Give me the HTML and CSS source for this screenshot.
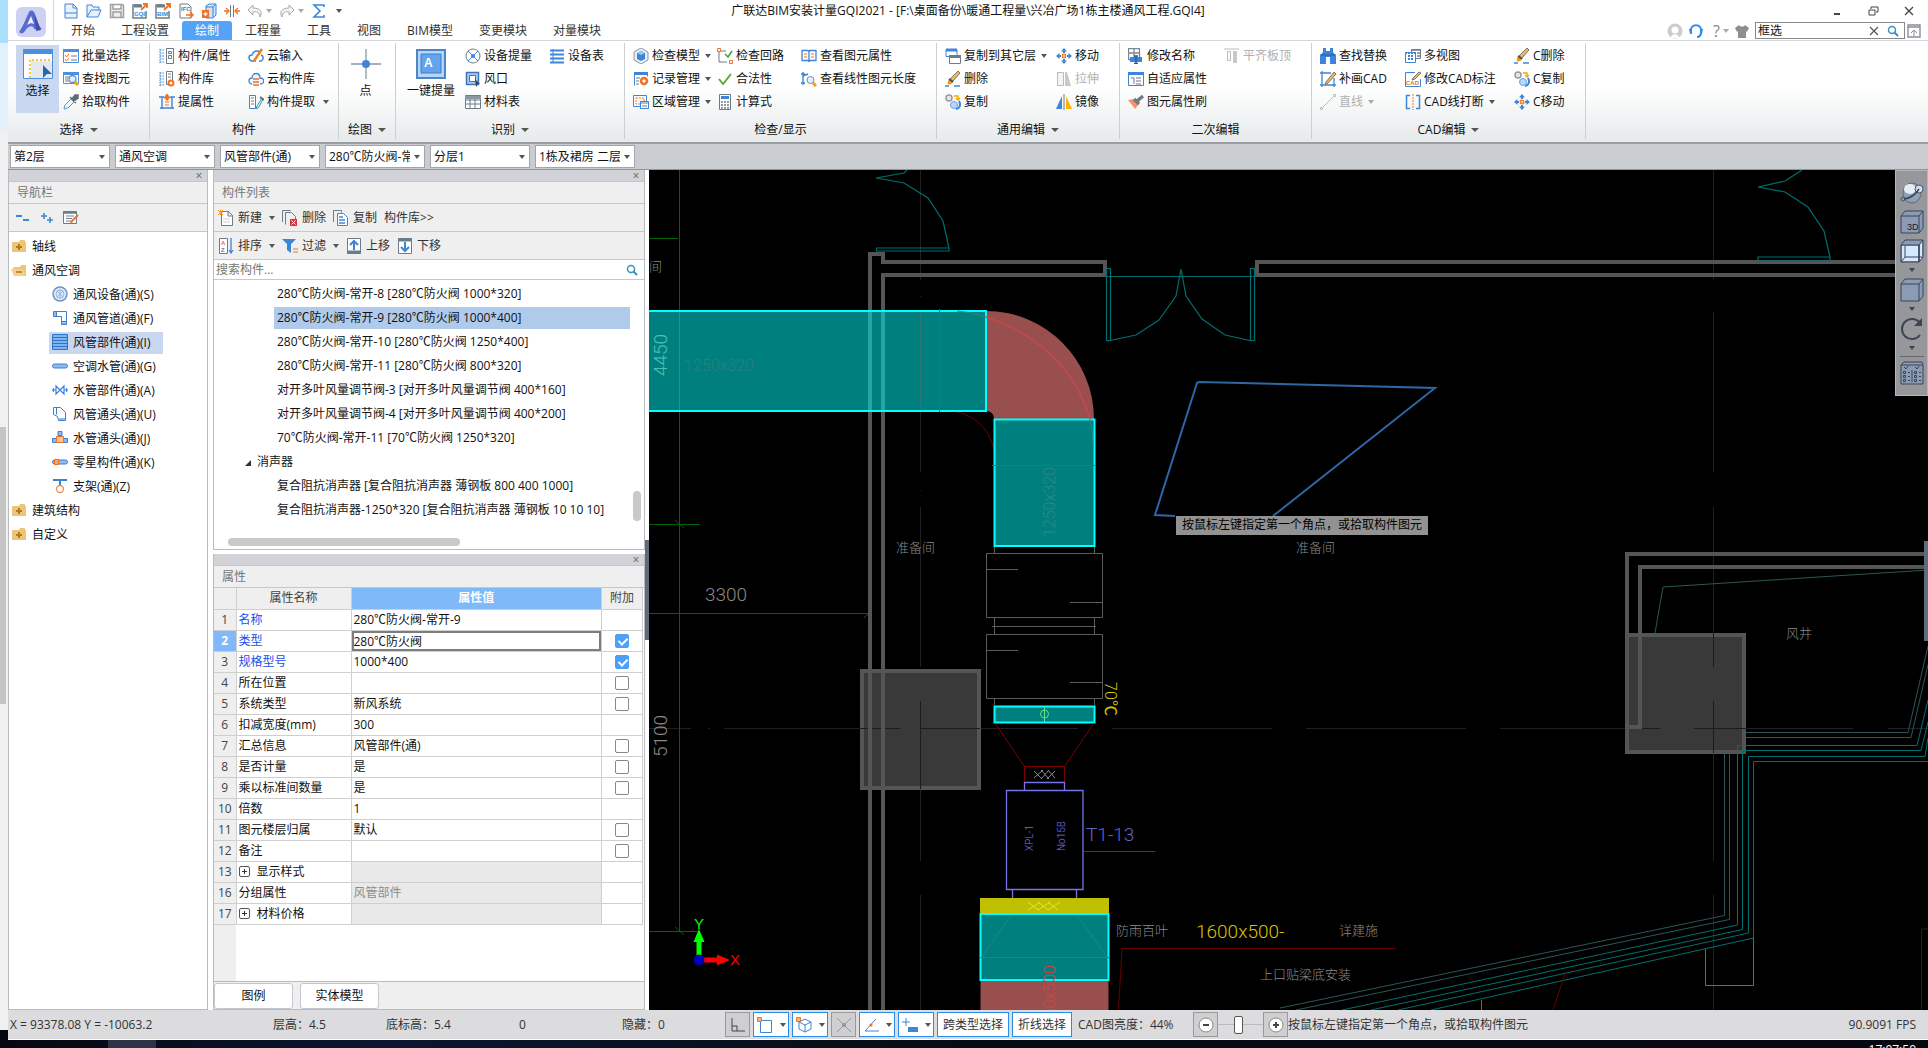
FILE: index.html
```html
<!DOCTYPE html>
<html lang="zh-CN">
<head>
    <meta charset="UTF-8">
    <meta name="viewport" content="width=device-width, initial-scale=1.0">
    <title>广联达BIM安装计量GQI2021</title>
    <link rel="stylesheet" href="styles.css">
</head>
<body>
    <!-- shared icons -->
    <svg class="sprite" width="0" height="0" aria-hidden="true">
        <symbol id="i-eraser" viewBox="0 0 16 16"><path d="M0 15h4M9 15h6" stroke="#3d85d8" stroke-width="1.5"/><path d="M13 0l2 2-7 8-3-2z" fill="#f8b64c" stroke="#777"/><path d="M5 8l3 2c-1 4-4 4-5 3s0-4 2-5z" fill="#ff9800"/><path d="M4 8l4 3" stroke="#456" stroke-width="2"/></symbol>
        <symbol id="i-copies" viewBox="0 0 16 16"><circle cx="4" cy="4" r="3" fill="#e8e8e8" stroke="#999" stroke-width="1.5"/><path d="M9 2h4v3M11 4l2 2 2-2" fill="none" stroke="#f5a800" stroke-width="1.3"/><path d="M14 7c2 4 1 7-3 8" fill="none" stroke="#3d85d8" stroke-width="2"/><circle cx="9" cy="11" r="3.500" fill="#b9d8fb" stroke="#6aa5e6"/></symbol>
        <symbol id="i-move" viewBox="0 0 16 16"><path d="M8 0l3 3.500H5zM8 16l3-3.500H5zM0 8l3.500-3v6zM16 8l-3.500-3v6z" fill="#3d85d8"/><path d="M8 3v2M8 11v2M3 8h2M11 8h2" stroke="#3d85d8" stroke-width="2"/><path d="M6.500 6.500h3v3h-3z" fill="#fff" stroke="#f58220" stroke-width="1.5"/></symbol>
        <symbol id="i-folder" viewBox="0 0 16 16"><path d="M1 4h7l1-2h5v2h1v10H1z" fill="#ecc578"/><path d="M8 6v6M5 9h6" stroke="#b77a16" stroke-width="2"/></symbol>
        <symbol id="i-mag" viewBox="0 0 12 12"><circle cx="5" cy="5" r="3.500" fill="none" stroke="#3b8fbf" stroke-width="1.5"/><path d="M7.500 7.500l3.500 3.500" stroke="#3b8fbf" stroke-width="2"/></symbol>
        <symbol id="i-cube" viewBox="0 0 24 24"><path d="M1 6l4-5h18v17l-4 5H1z" fill="#8b9bb3"/><path d="M1 6l4-5h18v17l-4 5H1zM1 6h18v17M19 6l4-5" fill="none" stroke="#3b4556"/></symbol>
    </svg>

    <div class="screen">
        <div class="behind"><i></i></div>
        <div class="app">
            <header class="header">
                <button class="logo" aria-label="菜单">
                    <svg width="30" height="30" viewBox="0 0 30 30"><rect width="30" height="30" rx="6" fill="#cdd2f2"/><path d="M3 25C7 20 10 11 13 5c1-2 4-2 5 0l3 12 5 5-8 0c0-4-6-4-9 2-2 3-4 3-6 1z" fill="#5a6bd0"/><path d="M15 9l-4 9c3-2 5-2 7-1z" fill="#eef0fc"/><path d="M18 5l7 18-5 1z" fill="#3f4fae"/></svg>
                </button>
                <div class="quick">
                    <button aria-label="新建"><svg class="ic" viewBox="0 0 16 16"><path d="M2 1h8l4 4v10H2zM10 1v4h4M2 10h12" fill="#e8f2fd" stroke="#3d85d8"/></svg></button>
                    <button aria-label="打开"><svg class="ic" viewBox="0 0 16 16"><path d="M1 14V2h5l1 2h6v3M1 14l4-7h10l-3 7z" fill="#e8f2fd" stroke="#3d85d8"/></svg></button>
                    <button aria-label="保存"><svg class="ic" viewBox="0 0 16 16"><path d="M1.500 1.500h12l1 1v12h-13zM4 2v4h8V2M4 14v-5h8v5" fill="#eee" stroke="#a0a0a0" stroke-width="1.5"/></svg></button>
                    <button aria-label="导出GQI"><svg class="ic" viewBox="0 0 16 16"><path d="M9 2H1v13h13V8" fill="none" stroke="#6d7d88" stroke-width="1.5"/><path d="M2 3h8" stroke="#6d7d88" stroke-width="3"/><path d="M9 7l6-6M11 1h4v4" fill="none" stroke="#f37021" stroke-width="1.8"/><text x="2" y="13" class="tiny blue">GQI</text></svg></button>
                    <button aria-label="导出BIM"><svg class="ic" viewBox="0 0 16 16"><path d="M9 2H1v13h13V8" fill="none" stroke="#6d7d88" stroke-width="1.5"/><path d="M2 3h8" stroke="#6d7d88" stroke-width="3"/><path d="M9 7l6-6M11 1h4v4" fill="none" stroke="#f37021" stroke-width="1.8"/><text x="2" y="13" class="tiny blue">BIM</text></svg></button>
                    <button aria-label="导出IFC"><svg class="ic" viewBox="0 0 16 16"><path d="M2 1h8l3 3v11H2z" fill="#fff" stroke="#6d7d88"/><text x="3" y="8" class="tiny">IFC</text><path d="M8 12h7M12 9l3 3-3 3" fill="none" stroke="#f37021" stroke-width="1.5"/></svg></button>
                    <button aria-label="添加"><svg class="ic" viewBox="0 0 16 16"><path d="M5 3l3-2h7v11l-3 3H5z" fill="#cfe3fa" stroke="#3d85d8"/><path d="M12 4v10M5 4h7l3-3" fill="none" stroke="#3d85d8"/><path d="M1 7h7v8H1z" fill="#f37021"/><path d="M4.500 9v4M2.500 11h4" stroke="#fff" stroke-width="1.3"/></svg></button>
                    <button aria-label="对齐"><svg class="ic" viewBox="0 0 16 16"><path d="M6.500 2v12M9.500 2v12" stroke="#6d7d88"/><path d="M0 8h4M2 5l3 3-3 3M16 8h-4M14 5l-3 3 3 3" fill="none" stroke="#f37021" stroke-width="1.3"/></svg></button>
                    <button aria-label="撤销"><svg class="ic" viewBox="0 0 16 16"><path d="M6 2L1 7l5 5V9c4-1 6 0 7 5 3-5 0-9-7-9z" fill="#f4f4f4" stroke="#a8a8a8"/></svg></button>
                    <button class="dd" aria-label="撤销列表"><i class="caret faint"></i></button>
                    <button aria-label="重做"><svg class="ic" viewBox="0 0 16 16"><path d="M10 2l5 5-5 5V9c-4-1-6 0-7 5-3-5 0-9 7-9z" fill="#f4f4f4" stroke="#a8a8a8"/></svg></button>
                    <button class="dd" aria-label="重做列表"><i class="caret faint"></i></button>
                    <button aria-label="汇总"><svg class="ic" viewBox="0 0 16 16"><path d="M13 4V2H3l6 6-6 6h10v-2" fill="none" stroke="#3d85d8" stroke-width="1.6"/></svg></button>
                    <button class="dd over" aria-label="更多"><i class="caret"></i></button>
                </div>
                <h1 class="title">广联达BIM安装计量GQI2021 - [F:\桌面备份\暖通工程量\兴冶广场1栋主楼通风工程.GQI4]</h1>
                <div class="window-buttons">
                    <button aria-label="最小化"><svg class="ic" viewBox="0 0 16 16"><path d="M5 11h6" stroke="#444" stroke-width="2"/></svg></button>
                    <button aria-label="还原"><svg class="ic" viewBox="0 0 16 16"><path d="M6 6V4h7v5h-2M4 7h6v5H4z" fill="none" stroke="#444"/></svg></button>
                    <button aria-label="关闭"><svg class="ic" viewBox="0 0 16 16"><path d="M4 4l8 8M12 4l-8 8" stroke="#444" stroke-width="1.3"/></svg></button>
                </div>
                <nav class="tabs">
                    <button>开始</button><button>工程设置</button><button class="active">绘制</button><button>工程量</button><button>工具</button><button>视图</button><button>BIM模型</button><button>变更模块</button><button>对量模块</button>
                </nav>
                <div class="tools">
                    <svg class="ic" viewBox="0 0 16 16"><circle cx="8" cy="8" r="7.500" fill="#ccc"/><circle cx="8" cy="7" r="3.500" fill="#fff"/><path d="M4 15c0-5 8-5 8 0z" fill="#fff"/></svg>
                    <svg class="ic" viewBox="0 0 16 16"><path d="M3 9C1 0 15 0 13 9M9 14c3 0 4-2 4-5" fill="none" stroke="#2f8cf0" stroke-width="2"/><path d="M1 6h3v5H2zM15 6h-3v5h2z" fill="#2f8cf0"/></svg>
                    <button class="help">?<i class="caret faint"></i></button>
                    <svg class="ic" viewBox="0 0 16 16"><path d="M5 2c1 2 5 2 6 0l4 3-2 4-1-1v7H4V8L3 9 1 5z" fill="#8e8e8e"/></svg>
                    <label class="top-search"><input type="text" value="框选" aria-label="搜索命令"><svg width="12" height="12" viewBox="0 0 12 12"><path d="M2 2l8 8M10 2l-8 8" stroke="#555" stroke-width="1.2"/></svg><svg width="12" height="12"><use href="#i-mag"/></svg></label>
                    <svg class="ic" viewBox="0 0 16 16"><path d="M2 2h12v12H2zM2 4h12" fill="none" stroke="#8a8f96" stroke-width="1.4"/><path d="M8 13V7M5 10l3-3 3 3" fill="none" stroke="#8a8f96"/></svg>
                </div>
            </header>

            <section class="ribbon">
                <div class="group g-select">
                    <div class="cols">
                        <button class="big on"><svg width="30" height="30" viewBox="0 0 30 30"><path d="M.5.5h29v29H.5z" fill="#fff" stroke="#4a90dd"/><path d="M0 0h30v5H0z" fill="#4a90dd"/><path d="M7 29V11h20" fill="none" stroke="#f0b400" stroke-width="1.5" stroke-dasharray="2 2"/><path d="M8 12h21v17H8z" fill="#e4e8ee"/><path d="M20 16l9 9h-5l-4 4z" fill="#2767b0"/></svg>选择</button>
                        <div class="col">
                            <button><svg class="ic" viewBox="0 0 16 16"><path d="M.5 1.500h15v13H.5z" fill="#fff" stroke="#4a90dd"/><path d="M0 1h16v3H0z" fill="#4a90dd"/><path d="M2 7l1.500 2L6 6M2 11l1.500 2L6 10" fill="none" stroke="#f37021"/><path d="M8 8h6M8 12h6" stroke="#6d7d88"/></svg>批量选择</button>
                            <button><svg class="ic" viewBox="0 0 16 16"><path d="M.5 1.500h15v11H.5z" fill="#fff" stroke="#4a90dd"/><path d="M0 1h16v3H0z" fill="#4a90dd"/><path d="M2 6h4M2 8h3M2 10h4" stroke="#6d7d88"/><circle cx="9.500" cy="8" r="3.500" fill="#e6eefb" stroke="#6688cc" stroke-width="1.3"/><path d="M12 11l3 3" stroke="#f5a100" stroke-width="3"/></svg>查找图元</button>
                            <button><svg class="ic" viewBox="0 0 16 16"><path d="M1 15l1-4 6-6 3 3-6 6z" fill="#eef6fb" stroke="#5a9bc8"/><path d="M7 3l6 6M9 5l3-4 3 0v3l-4 3z" fill="#5f6c78" stroke="#5f6c78" stroke-width="1.5"/></svg>拾取构件</button>
                        </div>
                    </div>
                    <div class="caption">选择<i class="caret lg"></i></div>
                </div>
                <div class="group g-comp">
                    <div class="cols">
                        <div class="col">
                            <button><svg class="ic" viewBox="0 0 16 16"><path d="M1 1v14M1 2h4M1 5h4M1 8h4M1 11h4M1 14h4" fill="none" stroke="#3d85d8" stroke-dasharray="1.500 1"/><path d="M7.500.5h7v15h-7z" fill="#fff" stroke="#6d7d88"/><path d="M9.500 3.500h3v2h-3zM9.500 7.500h3v3h-3z" fill="none" stroke="#6d7d88"/></svg>构件/属性</button>
                            <button><svg class="ic" viewBox="0 0 16 16"><path d="M1 1v14M1 2h4M1 5h4M1 8h4M1 11h4M1 14h4" fill="none" stroke="#3d85d8" stroke-dasharray="1.500 1"/><path d="M7.500.5h6v13h-6z" fill="#fff" stroke="#6d7d88"/><path d="M9 3h3M9 6h3" stroke="#6d7d88"/><circle cx="12" cy="12" r="2.500" fill="#fff" stroke="#f37021" stroke-width="2"/></svg>构件库</button>
                            <button><svg class="ic" viewBox="0 0 16 16"><path d="M0 3h5M11 3h5M3 3v12M13 3v12M1 14h14" fill="none" stroke="#3d85d8" stroke-width="1.4"/><path d="M8 0l3 4H9v2H7V4H5zM6 8h4M6 11h4" fill="#f37021" stroke="#f37021"/></svg>提属性</button>
                        </div>
                        <div class="col">
                            <button><svg class="ic" viewBox="0 0 16 16"><path d="M8 13H4C0 12 0 7 4 7c1-4 5-5 8-3" fill="none" stroke="#3d85d8" stroke-width="1.4"/><path d="M13 7c3 1 3 5 0 6h-2" fill="none" stroke="#3d85d8" stroke-width="1.4"/><path d="M14 1l-8 12" stroke="#f08020" stroke-width="2.500"/></svg>云输入</button>
                            <button><svg class="ic" viewBox="0 0 16 16"><path d="M4 13C0 13 0 7 4 7c0-6 8-6 8 0 5 0 5 6 0 6" fill="#eef6ff" stroke="#3d85d8" stroke-width="1.3"/><path d="M5 8h6M5 11h6M5 14h6" stroke="#f37021" stroke-width="1.6"/></svg>云构件库</button>
                            <button><svg class="ic" viewBox="0 0 16 16"><path d="M1.500 1.500h6v13h-6z" fill="#fff" stroke="#3d85d8"/><path d="M3 4h3M3 7h3M3 10h3" stroke="#6d7d88"/><path d="M14 4l-5 8-1 3 3-2 4-8" fill="#dff3f8" stroke="#3a9ab0"/><path d="M12 3l4 3" stroke="#5f6c78" stroke-width="2"/></svg>构件提取<i class="caret far"></i></button>
                        </div>
                    </div>
                    <div class="caption">构件</div>
                </div>
                <div class="group g-draw">
                    <div class="cols">
                        <button class="big"><svg width="30" height="30" viewBox="0 0 30 30"><path d="M15 0v30M0 15h30" stroke="#8b97a3" stroke-width="1.3"/><circle cx="15" cy="15" r="4" fill="#3d85d8"/></svg>点</button>
                    </div>
                    <div class="caption">绘图<i class="caret lg"></i></div>
                </div>
                <div class="group g-detect">
                    <div class="cols">
                        <button class="big wide"><svg width="30" height="30" viewBox="0 0 30 30"><path d="M1 1h28v28H1z" fill="#b8d5f7" stroke="#4a87c8" stroke-width="2"/><path d="M5 5h20v19H5z" fill="#62a4ee" stroke="#3f7ec4"/><text x="8" y="18" class="glyph">A</text></svg>一键提量</button>
                        <div class="col">
                            <button><svg class="ic" viewBox="0 0 16 16"><circle cx="8" cy="8" r="7" fill="#fff" stroke="#6d7d88"/><path d="M3 3l10 10M13 3L3 13" stroke="#3d85d8"/><circle cx="8" cy="8" r="2" fill="#3d85d8"/></svg>设备提量</button>
                            <button><svg class="ic" viewBox="0 0 16 16"><path d="M1.500 1.500h12v12h-12z" fill="#a9ccf5" stroke="#3d74b8" stroke-width="1.5"/><path d="M4.500 4.500h6v6h-6z" fill="#fff" stroke="#3d74b8"/><path d="M10 8l5 5-2 0-2 3z" fill="#444"/></svg>风口</button>
                            <button><svg class="ic" viewBox="0 0 16 16"><path d="M.5 1.500h15v13H.5zM0 6h16M0 10h16M5 1v14M10 1v14" fill="#fff" stroke="#6d7d88"/><path d="M0 2h16v3H0z" fill="#8b97a3"/></svg>材料表</button>
                        </div>
                        <div class="col">
                            <button><svg class="ic" viewBox="0 0 16 16"><path d="M1 2.500h14M1 6.500h14M1 10.500h14M1 14.500h14" stroke="#3d85d8" stroke-width="2"/><path d="M4 1v14" stroke="#3d85d8"/></svg>设备表</button>
                        </div>
                    </div>
                    <div class="caption">识别<i class="caret lg"></i></div>
                </div>
                <div class="group g-check">
                    <div class="cols">
                        <div class="col">
                            <button><svg class="ic" viewBox="0 0 16 16"><path d="M8 0l7 4v8l-7 4-7-4V4z" fill="#e8eef4" stroke="#8b97a3"/><path d="M8 3l4 2v6l-4 2-4-2V5z" fill="#3d85d8"/><path d="M8 7l4-2-4-2-4 2z" fill="#9cc8f8"/></svg>检查模型<i class="caret near"></i></button>
                            <button><svg class="ic" viewBox="0 0 16 16"><path d="M1.500 14.500V1.500h13v4" fill="#fff" stroke="#3d85d8"/><path d="M1 2.500h14" stroke="#3d85d8" stroke-width="3"/><path d="M3 7h4M3 10h3M3 13h3" stroke="#6d7d88"/><circle cx="11" cy="10" r="3" fill="#fff" stroke="#f37021" stroke-width="2.500"/></svg>记录管理<i class="caret near"></i></button>
                            <button><svg class="ic" viewBox="0 0 16 16"><path d="M.5 1.500h13v11H.5z" fill="#fff" stroke="#3d85d8"/><path d="M3 4h8v6H3z" fill="none" stroke="#f37021" stroke-dasharray="2 1"/><path d="M7.500 7.500h8v7h-8z" fill="#fff" stroke="#3d85d8"/><path d="M8 9h7M9 12h5" stroke="#6d7d88"/></svg>区域管理<i class="caret near"></i></button>
                        </div>
                        <div class="col">
                            <button><svg class="ic" viewBox="0 0 16 16"><path d="M4 3h5M2 4v10h8" fill="none" stroke="#6d7d88"/><path d="M.5.5h3v3h-3zM12.500 12.500h3v3h-3z" fill="#fff" stroke="#f37021"/><path d="M8 6l3 3 4-6" fill="none" stroke="#4aa04a" stroke-width="1.6"/></svg>检查回路</button>
                            <button><svg class="ic" viewBox="0 0 16 16"><path d="M2 8l4 5 8-10" fill="none" stroke="#5aa83c" stroke-width="2"/></svg>合法性</button>
                            <button><svg class="ic" viewBox="0 0 16 16"><path d="M2.500.5h11v15h-11z" fill="#fff" stroke="#6d7d88"/><path d="M4 2h8v3H4z" fill="#3d85d8"/><path d="M4 8h8M4 11h8M4 14h8" stroke="#6d7d88" stroke-width="1.5" stroke-dasharray="2 1"/></svg>计算式</button>
                        </div>
                        <div class="col">
                            <button><svg class="ic" viewBox="0 0 16 16"><path d="M1 2.500h6l1 1 1-1h6v10H9l-1 1-1-1H1zM8 3v10" fill="#fff" stroke="#3d85d8" stroke-width="1.3"/><path d="M3 6h3M3 9h3M10 6h3M10 9h3" stroke="#f37021"/></svg>查看图元属性</button>
                            <button><svg class="ic" viewBox="0 0 16 16"><path d="M2 1v13M0 3h4M0 12h4M2 5l5-2" stroke="#3d85d8" stroke-width="1.4"/><circle cx="9.500" cy="9" r="3.500" fill="#e6eefb" stroke="#6688cc"/><path d="M12 12l3 3" stroke="#f5a100" stroke-width="3"/></svg>查看线性图元长度</button>
                        </div>
                    </div>
                    <div class="caption">检查/显示</div>
                </div>
                <div class="group g-edit">
                    <div class="cols">
                        <div class="col">
                            <button><svg class="ic" viewBox="0 0 16 16"><path d="M1 1.500h11v7H1z" fill="#fff" stroke="#3d85d8"/><path d="M1 2h11" stroke="#3d85d8" stroke-width="3"/><path d="M4.500 7.500h11v8h-11z" fill="#fff" stroke="#6d7d88"/><path d="M4 8.500h12" stroke="#6d7d88" stroke-width="3"/></svg>复制到其它层<i class="caret near"></i></button>
                            <button><svg class="ic"><use href="#i-eraser"/></svg>删除</button>
                            <button><svg class="ic"><use href="#i-copies"/></svg>复制</button>
                        </div>
                        <div class="col">
                            <button><svg class="ic"><use href="#i-move"/></svg>移动</button>
                            <button disabled><svg class="ic" viewBox="0 0 16 16"><path d="M1.500 1.500h6v13h-6z" fill="#f4f4f4" stroke="#bbb"/><path d="M9 1h2l4 14H9z" fill="#c8c8c8"/></svg>拉伸</button>
                            <button><svg class="ic" viewBox="0 0 16 16"><path d="M6 2v13H0z" fill="#3d85d8"/><path d="M10 2v13h6z" fill="#fbb400"/><path d="M8 0v16" stroke="#6d7d88"/></svg>镜像</button>
                        </div>
                    </div>
                    <div class="caption">通用编辑<i class="caret lg"></i></div>
                </div>
                <div class="group g-second">
                    <div class="cols">
                        <div class="col">
                            <button><svg class="ic" viewBox="0 0 16 16"><path d="M.5.5h11v11H.5zM0 5h11M6 0v12" fill="none" stroke="#7b8893" stroke-width="1.3"/><path d="M2 9h12v5H2z" fill="#3d85d8"/><path d="M8 8v8M6 8h4M6 15.500h4" stroke="#1f5ca8" stroke-width="1.3"/></svg>修改名称</button>
                            <button><svg class="ic" viewBox="0 0 16 16"><path d="M.5 1.500h15v13H.5z" fill="#fff" stroke="#3d85d8"/><path d="M0 2.500h16" stroke="#3d85d8" stroke-width="3"/><path d="M3 7h3v6M8 7h5M8 10h5M8 13h5" fill="none" stroke="#6d7d88"/></svg>自适应属性</button>
                            <button><svg class="ic" viewBox="0 0 16 16"><path d="M0 6l6-1 5 5-4 5z" fill="#f5946c"/><path d="M6 5l5 5M9 7l6-5" stroke="#6d7d88" stroke-width="3.500"/></svg>图元属性刷</button>
                        </div>
                        <div class="col">
                            <button disabled><svg class="ic" viewBox="0 0 16 16"><path d="M0 1h15" stroke="#bbb"/><path d="M3.500 3.500h3v9h-3z" fill="#fff" stroke="#bbb"/><path d="M9 3h4v12H9z" fill="#c8c8c8"/></svg>平齐板顶</button>
                        </div>
                    </div>
                    <div class="caption">二次编辑</div>
                </div>
                <div class="group g-cad">
                    <div class="cols">
                        <div class="col">
                            <button><svg class="ic" viewBox="0 0 16 16"><path d="M3 0h3v3h4V0h3v4l3 4v8h-6V9H6v7H0V8l3-4z" fill="#3d85d8"/><path d="M0 7h16" stroke="#1f5ca8"/></svg>查找替换</button>
                            <button><svg class="ic" viewBox="0 0 16 16"><path d="M2 0v16M0 2h11M0 14h16M14 7v9" stroke="#3d85d8" stroke-width="1.300"/><path d="M14 1l-8 10-1 3 3-2 8-9z" fill="#f8b64c" stroke="#777"/></svg>补画CAD</button>
                            <button disabled><svg class="ic" viewBox="0 0 16 16"><path d="M3 13L13 3M.5 13.500h2v2h-2zM13.500.5h2v2h-2z" fill="none" stroke="#bbb"/></svg>直线<i class="caret near faint"></i></button>
                        </div>
                        <div class="col">
                            <button><svg class="ic" viewBox="0 0 16 16"><path d="M6.500 1.500h9v9h-9z" fill="#fff" stroke="#6d7d88"/><path d="M6 2h10M12 5h3M12 8h3" stroke="#6d7d88" stroke-width="1.500"/><path d="M.5 4.500h10v10H.5z" fill="#fff" stroke="#3d85d8"/><path d="M0 5h11M3 8h6M3 11h6" stroke="#3d85d8" stroke-width="2" stroke-dasharray="2 1"/></svg>多视图</button>
                            <button><svg class="ic" viewBox="0 0 16 16"><path d="M10 1.500H.5v14h15V8" fill="#fff" stroke="#3d85d8"/><path d="M14 1l-6 6-1 2 3-1 6-6z" fill="#f8b64c" stroke="#777"/><text x="1" y="14" class="tiny orange">CAD</text></svg>修改CAD标注</button>
                            <button><svg class="ic" viewBox="0 0 16 16"><path d="M5 1.500H1.500v13H5M11 1.500h3.500v13H11" fill="none" stroke="#3d85d8" stroke-width="1.500"/><path d="M8 0v16" stroke="#f37021" stroke-dasharray="2 1"/></svg>CAD线打断<i class="caret near"></i></button>
                        </div>
                        <div class="col">
                            <button><svg class="ic"><use href="#i-eraser"/></svg>C删除</button>
                            <button><svg class="ic"><use href="#i-copies"/></svg>C复制</button>
                            <button><svg class="ic"><use href="#i-move"/></svg>C移动</button>
                        </div>
                    </div>
                    <div class="caption">CAD编辑<i class="caret lg"></i></div>
                </div>
            </section>

            <div class="filters">
                <span class="combo"><select aria-label="楼层"><option>第2层</option></select></span>
                <span class="combo"><select aria-label="专业"><option>通风空调</option></select></span>
                <span class="combo"><select aria-label="构件类型"><option>风管部件(通)</option></select></span>
                <span class="combo"><select aria-label="构件"><option>280℃防火阀-常开-9</option></select></span>
                <span class="combo"><select aria-label="分层"><option>分层1</option></select></span>
                <span class="combo"><select aria-label="图纸"><option>1栋及裙房 二层</option></select></span>
            </div>

            <main class="workspace">
                <aside class="panel nav-panel">
                    <div class="grip"><button aria-label="关闭导航栏">×</button></div>
                    <h2>导航栏</h2>
                    <div class="toolbar nav-tools">
                        <button aria-label="折叠"><svg class="ic" viewBox="0 0 16 16"><path d="M1 6h6M8 10h6" stroke="#3d85d8" stroke-width="2"/></svg></button>
                        <button aria-label="展开"><svg class="ic" viewBox="0 0 16 16"><path d="M2 6h6M5 3v6M8 10h6M11 7v6" stroke="#3d85d8" stroke-width="1.600"/></svg></button>
                        <button aria-label="编辑"><svg class="ic" viewBox="0 0 16 16"><path d="M.5 1.500h13v12H.5z" fill="#fff" stroke="#6d7d88"/><path d="M0 2.500h14" stroke="#6d7d88" stroke-width="2.500"/><path d="M3 6h8M3 8.500h6M3 11h5" stroke="#6d7d88"/><path d="M15 5l-6 6-1 2" fill="none" stroke="#f37021" stroke-width="2"/></svg></button>
                    </div>
                    <ul class="tree">
                        <li><svg class="ic"><use href="#i-folder"/></svg>轴线</li>
                        <li><svg class="ic" viewBox="0 0 16 16"><path d="M2 5h7l1-2h5v11H4z" fill="#ecc578"/><path d="M0 7h12l2 7H3z" fill="#f2d08c"/><path d="M5 10h6" stroke="#b77a16" stroke-width="1.500"/></svg>通风空调
                            <ul>
                                <li><svg class="ic" viewBox="0 0 16 16"><circle cx="8" cy="8" r="7" fill="#dce9f8" stroke="#6b94c8" stroke-width="1.500"/><circle cx="8" cy="8" r="4" fill="none" stroke="#9db8dc"/><path d="M5 5l6 6M11 5l-6 6M8 3v10" stroke="#9db8dc"/></svg>通风设备(通)(S)</li>
                                <li><svg class="ic" viewBox="0 0 16 16"><path d="M1.500 1.500h13v13h-5v-8h-8zM4.500 1.500v5M9.500 11.500h5" fill="#fff" stroke="#3d7fc8"/><path d="M2 2h2v4H2zM10 12h4v2h-4z" fill="#8ebcf0"/></svg>通风管道(通)(F)</li>
                                <li class="selected"><svg class="ic" viewBox="0 0 16 16"><path d="M.5.5h15v15H.5zM0 3.500h16M0 6.500h16M0 9.500h16M0 12.500h16" fill="#7db4f2" stroke="#2e74c4"/></svg>风管部件(通)(I)</li>
                                <li><svg class="ic" viewBox="0 0 16 16"><rect x=".5" y="6" width="15" height="4" rx="2" fill="#8ebcf0" stroke="#3d7fc8"/></svg>空调水管(通)(G)</li>
                                <li><svg class="ic" viewBox="0 0 16 16"><path d="M0 8h4M12 8h4M1.500 6v4M14.500 6v4M4 4l8 8V4l-8 8z" fill="none" stroke="#3d85d8" stroke-width="1.200"/></svg>水管部件(通)(A)</li>
                                <li><svg class="ic" viewBox="0 0 16 16"><path d="M1.500 1.500h7l5 5v8h-7l-1-4-4-2zM4.500 1.500v7" fill="#fff" stroke="#3d7fc8"/><path d="M7 12h6v2H7z" fill="#8ebcf0"/></svg>风管通头(通)(U)</li>
                                <li><svg class="ic" viewBox="0 0 16 16"><path d="M.5 8.500h4v4h-4zM11.500 8.500h4v4h-4zM6 1.500h4v4H6z" fill="#8ebcf0" stroke="#3d7fc8"/><path d="M4.500 6.500h7v6h-7z" fill="#ffc49a" stroke="#f37021"/></svg>水管通头(通)(J)</li>
                                <li><svg class="ic" viewBox="0 0 16 16"><rect x=".5" y="6" width="15" height="4" rx="2" fill="#8ebcf0" stroke="#3d7fc8"/><path d="M2.500 5.500h4v5h-4z" fill="#ffa468" stroke="#f37021"/></svg>零星构件(通)(K)</li>
                                <li><svg class="ic" viewBox="0 0 16 16"><path d="M1 2h14M8 2v6" stroke="#3d85d8" stroke-width="2"/><circle cx="8" cy="11" r="3.500" fill="#fff" stroke="#f58a52" stroke-width="1.300"/></svg>支架(通)(Z)</li>
                            </ul>
                        </li>
                        <li><svg class="ic"><use href="#i-folder"/></svg>建筑结构</li>
                        <li><svg class="ic"><use href="#i-folder"/></svg>自定义</li>
                    </ul>
                </aside>

                <div class="stack">
                    <section class="panel list-panel">
                        <div class="grip"><button aria-label="关闭构件列表">×</button></div>
                        <h2>构件列表</h2>
                        <div class="toolbar">
                            <button><svg class="ic" viewBox="0 0 16 16"><path d="M3.500 1.500h7l4 4v10h-11zM10 1v5h5" fill="#fff" stroke="#6d7d88"/><path d="M5 9h7M5 12h7" stroke="#d8c8cc"/><path d="M0 0l5 5M5 0L0 5M2.500 0v5" stroke="#f09a2a"/></svg>新建<i class="caret far"></i></button>
                            <button><svg class="ic" viewBox="0 0 16 16"><path d="M.5 12V.5h8M3.500 14.500v-12h6l4 4v4" fill="none" stroke="#6d7d88"/><path d="M8 9h7v7H8z" fill="#d9363e"/><path d="M9.500 10.500l4 4M13.500 10.500l-4 4" stroke="#fff"/></svg>删除</button>
                            <button><svg class="ic" viewBox="0 0 16 16"><path d="M.5 12V.5h8v2" fill="none" stroke="#6d7d88"/><path d="M4.500 3.500h6l4 4v8h-10z" fill="#fff" stroke="#3d85d8"/><path d="M6 7h4M6 10h6M6 13h6" stroke="#3d85d8" stroke-width="1.400"/></svg>复制</button>
                            <button>构件库&gt;&gt;</button>
                        </div>
                        <div class="toolbar">
                            <button><svg class="ic" viewBox="0 0 16 16"><path d="M1.500.5h8v15h-8z" fill="#fff" stroke="#6d7d88"/><text x="3" y="7" class="tiny orange">A</text><text x="3" y="14" class="tiny">Z</text><path d="M13 0v14M11 12l2 3 2-3" fill="none" stroke="#3d85d8" stroke-width="1.300"/></svg>排序<i class="caret far"></i></button>
                            <button><svg class="ic" viewBox="0 0 16 16"><path d="M0 1h14l-5 5v9l-4-3V6z" fill="#3d85d8"/><path d="M11 11h5M11 14h5" stroke="#f37021"/></svg>过滤<i class="caret far"></i></button>
                            <button><svg class="ic" viewBox="0 0 16 16"><path d="M1.500.5h13v15h-13z" fill="#fff" stroke="#6d7d88"/><path d="M1 14h14" stroke="#6d7d88" stroke-width="3"/><path d="M8 12V3M4 7l4-4 4 4" fill="none" stroke="#3d85d8" stroke-width="2"/></svg>上移</button>
                            <button><svg class="ic" viewBox="0 0 16 16"><path d="M1.500.5h13v15h-13z" fill="#fff" stroke="#6d7d88"/><path d="M1 2h14" stroke="#6d7d88" stroke-width="3"/><path d="M8 4v9M4 9l4 4 4-4" fill="none" stroke="#3d85d8" stroke-width="2"/></svg>下移</button>
                        </div>
                        <label class="search"><input type="text" placeholder="搜索构件..." aria-label="搜索构件"><svg width="12" height="12"><use href="#i-mag"/></svg></label>
                        <div class="list-box">
                            <ul class="items">
                                <li>280℃防火阀-常开-8 [280℃防火阀 1000*320]</li>
                                <li class="selected">280℃防火阀-常开-9 [280℃防火阀 1000*400]</li>
                                <li>280℃防火阀-常开-10 [280℃防火阀 1250*400]</li>
                                <li>280℃防火阀-常开-11 [280℃防火阀 800*320]</li>
                                <li>对开多叶风量调节阀-3 [对开多叶风量调节阀 400*160]</li>
                                <li>对开多叶风量调节阀-4 [对开多叶风量调节阀 400*200]</li>
                                <li>70℃防火阀-常开-11 [70℃防火阀 1250*320]</li>
                                <li class="parent">消声器</li>
                                <li>复合阻抗消声器 [复合阻抗消声器 薄钢板 800 400 1000]</li>
                                <li>复合阻抗消声器-1250*320 [复合阻抗消声器 薄钢板 10 10 10]</li>
                            </ul>
                            <div class="vbar"></div>
                            <div class="hbar"></div>
                        </div>
                    </section>

                    <section class="panel prop-panel">
                        <div class="grip"><button aria-label="关闭属性">×</button></div>
                        <h2>属性</h2>
                        <div class="prop-box">
                            <table class="props">
                                <thead><tr><th class="num"></th><th class="name">属性名称</th><th class="value">属性值</th><th class="extra">附加</th></tr></thead>
                                <tbody>
                                    <tr><th>1</th><td class="link">名称</td><td>280℃防火阀-常开-9</td><td></td></tr>
                                    <tr class="current"><th>2</th><td class="link">类型</td><td class="edit"><input type="text" value="280℃防火阀" aria-label="类型"></td><td><input type="checkbox" checked aria-label="附加 类型"></td></tr>
                                    <tr><th>3</th><td class="link">规格型号</td><td>1000*400</td><td><input type="checkbox" checked aria-label="附加 规格型号"></td></tr>
                                    <tr><th>4</th><td>所在位置</td><td></td><td><input type="checkbox" aria-label="附加 所在位置"></td></tr>
                                    <tr><th>5</th><td>系统类型</td><td>新风系统</td><td><input type="checkbox" aria-label="附加 系统类型"></td></tr>
                                    <tr><th>6</th><td>扣减宽度(mm)</td><td>300</td><td></td></tr>
                                    <tr><th>7</th><td>汇总信息</td><td>风管部件(通)</td><td><input type="checkbox" aria-label="附加 汇总信息"></td></tr>
                                    <tr><th>8</th><td>是否计量</td><td>是</td><td><input type="checkbox" aria-label="附加 是否计量"></td></tr>
                                    <tr><th>9</th><td>乘以标准间数量</td><td>是</td><td><input type="checkbox" aria-label="附加 乘以标准间数量"></td></tr>
                                    <tr><th>10</th><td>倍数</td><td>1</td><td></td></tr>
                                    <tr><th>11</th><td>图元楼层归属</td><td>默认</td><td><input type="checkbox" aria-label="附加 图元楼层归属"></td></tr>
                                    <tr><th>12</th><td>备注</td><td></td><td><input type="checkbox" aria-label="附加 备注"></td></tr>
                                    <tr><th>13</th><td><button class="expand" aria-label="展开"></button>显示样式</td><td class="off"></td><td></td></tr>
                                    <tr><th>16</th><td>分组属性</td><td class="off">风管部件</td><td></td></tr>
                                    <tr><th>17</th><td><button class="expand" aria-label="展开"></button>材料价格</td><td class="off"></td><td></td></tr>
                                </tbody>
                            </table>
                        </div>
                        <div class="prop-actions"><button>图例</button><button>实体模型</button></div>
                    </section>
                </div>

                <div class="splitter"><i></i></div>

                <section class="canvas">
                    <svg class="drawing" viewBox="649 170 1279 840" preserveAspectRatio="xMinYMin slice">
                        <!-- axis grid -->
                        <g stroke="#202020" fill="none">
                            <path d="M920.500 170v110M920.500 296v1M920.500 312v160M920.500 490v1M920.500 507v160M920.500 789v72M920.500 895v115M1713.500 170v110M1713.500 312v160M1713.500 507v126M1713.500 753v108M1713.500 895v115"/>
                            <path d="M649 728.500h42M708 728.500h2M724 728.500h136M980 728.500h98M1112 728.500h160M1306 728.500h160M1500 728.500h125M1746 728.500h107M1888 728.500h40M1921.500 1010v-81h7"/>
                        </g>
                        <!-- dimension lines -->
                        <g stroke="#006400" fill="none">
                            <path d="M679.500 170v762M649 238.500h29M649 524.500h51M649 613.500h219M649 931.500h50M675 520l9 8M675 927l9 8M864 618l5-5"/>
                            <path d="M1083 851.500h72"/>
                        </g>
                        <!-- columns -->
                        <path d="M862 671h117v117H862zM1627 635h117v117h-117z" fill="#393939" stroke="#555" stroke-width="4"/>
                        <path d="M920.500 701v88M920 728.500h60M860 728.500h40M1713.500 633v34M1713.500 701v52M1642 728.500h18M1694 728.500h52" stroke="#1c1c1c"/>
                        <!-- walls -->
                        <g fill="none" stroke="#555" stroke-width="4">
                            <path d="M870 1010V254h13v8h222v13H883v735"/>
                            <path d="M1928 262h-671v13h671"/>
                            <path d="M1627 635v-81h301M1928 567h-288v160h-13"/>
                        </g>
                        <!-- doors -->
                        <g fill="none" stroke="#006f6f" stroke-width="1.200">
                            <path d="M907 170l-3 3-28 5 28 5 24 15 15 23 6 27v3h-72.500v-3H949"/>
                            <path d="M1107 276.500h147M1106.500 268.500h4v72h-4zM1250.500 268.500h4v72h-4zM1108 341l28-6 23-15 17-24 5-27 5 27 16 23 23 16 27 6"/>
                            <path d="M1802 170l-17 11-27 6 27 5 23 15 16 24 6 26v4h-72v-4h72"/>
                        </g>
                        <!-- pipes on the right -->
                        <g fill="none" stroke="#2b5757">
                            <path d="M1928 570l-265 17-8 46M1746 732.500h162L1928 646M1746 737.500h165l17-73M1724.500 753v162.500L1280 1008M1729.500 753v166.500L1296 1010"/>
                        </g>
                        <g fill="none" stroke="#007070">
                            <path d="M1928 700l-11 45.500h-179.500V925L1342 1010M1928 722l-7 28.500h-178.500V929.500L1371 1010M1928 738l-3 18.500h-176.500V933L1398 1010M1928 761.500h-174.500V938L1431 1010"/>
                        </g>
                        <path d="M1705.500 949v36.500h48V938M1481.500 1000v10" fill="none" stroke="#7a6a3a"/>
                        <path d="M1565 974l-12 36M1396 948.500h-274l-3.500 61.500M953 411c22 4 37 18 41.500 41" fill="none" stroke="#6b0000"/>
                        <!-- duct run -->
                        <path d="M986 311A108 108 0 0 1 1094 419H994c0-5-3-8-8-8z" fill="#9a4f4f"/>
                        <path d="M640 311h346v100H640zM994.500 419.500h100V546h-100zM994.500 706.500h100v16h-100z" fill="#007f7f" stroke="#00ffff" stroke-width="2"/>
                        <path d="M870 312v98M883 312v98" stroke="#26a5a5" stroke-width="4"/>
                        <path d="M679.500 312v98" stroke="#00b060"/>
                        <path d="M920.500 312v98M939.500 309v103M992 465.500h104" stroke="#2b7777"/>
                        <path d="M957 311q15 1 29 6M1090 419q3 13 3 26" fill="none" stroke="#2b8888"/>
                        <path d="M986 317c55 18 90 55 104 102" fill="none" stroke="#c84848" stroke-width="1.500"/>
                        <path d="M1044.500 706v16" stroke="#5fe08a"/><circle cx="1044.500" cy="714" r="4" fill="none" stroke="#5fe08a"/>
                        <!-- silencers -->
                        <g fill="none" stroke="#5c5c5c">
                            <path d="M994.500 547v7M1094.500 547v7M986.500 553.500h116v64h-116zM986 569.500h32M1070 602.500h32M994.500 618v16M1094.500 618v16M992 626.500h104M986.500 634.500h116v64h-116zM986 650.500h32M1070 682.500h32M994.500 698v7M1094.500 698v7"/>
                        </g>
                        <!-- fan -->
                        <path d="M995 723l29.500 43.500h40L1094 723M1024.500 766v16M1064.500 766v16" fill="none" stroke="#7a0000"/>
                        <path d="M1034 771l8 8M1041 770l8 9M1048 770l7 8M1034 778l9-8M1041 779l8-9M1047 779l8-8" stroke="#8a8a8a"/>
                        <path d="M1024.500 790v-7.500h40v7.500M1006.500 790.500h76.500v99h-76.500zM1012.500 890v8M1076.500 890v8" fill="none" stroke="#7474e8" stroke-width="1.300"/>
                        <path d="M980 898h129v15H980z" fill="#c0c000"/>
                        <path d="M1028 902l10 8M1038 902l10 8M1048 902l10 8M1028 910l12-8M1038 910l12-8M1048 910l12-8" stroke="#e4e43c"/>
                        <path d="M980.500 980h128v30h-128z" fill="#9a4f4f"/>
                        <path d="M980.500 914h128v66h-128z" fill="#007f7f" stroke="#00ffff" stroke-width="2"/>
                        <path d="M982 957l29-42M1107 957l-30-42M980 957.500h129" stroke="#2b8080" fill="none"/>
                        <!-- pick outline -->
                        <path d="M1175 516l-20-1 42-132q1-1 3-1l235 6-162 128" fill="none" stroke="#2e66a6" stroke-width="2"/>
                        <!-- labels -->
                        <g class="cad">
                            <text x="705" y="601">3300</text>
                            <text x="649" y="271" class="zh">间</text>
                            <text transform="translate(667 376) rotate(-90)" fill="#4fc0b8">4450</text>
                            <text x="684" y="371" class="sm" fill="#2b8080">1250x320</text>
                            <text transform="translate(1055 537) rotate(-90)" class="sm" fill="#2b8888">1250x320</text>
                            <text transform="translate(667 757) rotate(-90)">5100</text>
                            <text transform="translate(1055 1035) rotate(-90)" class="sm" fill="#c84848">1600x500</text>
                            <text transform="translate(1105 682) rotate(90)" class="sm" fill="#d8c400">70℃</text>
                            <text transform="translate(1033 851) rotate(-90)" class="xs" fill="#7474e8">XPL-1</text>
                            <text transform="translate(1065 851) rotate(-90)" class="xs" fill="#7474e8">No15B</text>
                            <text x="1086" y="841" fill="#6464c8">T1-13</text>
                            <text x="1196" y="938" fill="#d8c400">1600x500-</text>
                            <text x="896" y="552" class="zh">准备间</text>
                            <text x="1296" y="552" class="zh">准备间</text>
                            <text x="1116" y="935" class="zh">防雨百叶</text>
                            <text x="1339" y="935" class="zh">详建施</text>
                            <text x="1260" y="979" class="zh">上口贴梁底安装</text>
                            <text x="1786" y="638" class="zh">风井</text>
                        </g>
                        <!-- UCS icon -->
                        <path d="M699 957v-15" stroke="#00ff00" stroke-width="5"/><path d="M693.500 942l5.500-13 5.500 13z" fill="#00ff00"/>
                        <path d="M702 960h16" stroke="#f00" stroke-width="5"/><path d="M717 954.500l13 5.500-13 5.500z" fill="#f00"/>
                        <circle cx="699" cy="960" r="5.500" fill="#0000b8"/>
                        <text x="694" y="929" class="ucs" fill="#00ff00">Y</text><text x="730" y="965" class="ucs" fill="#f00">X</text>
                    </svg>
                    <div class="hint">按鼠标左键指定第一个角点，或拾取构件图元</div>
                    <div class="view-tools">
                        <button aria-label="动态观察"><svg width="24" height="24" viewBox="0 0 24 24"><ellipse cx="12" cy="12" rx="9" ry="10" fill="#8fa1b5" stroke="#5c6b7c"/><ellipse cx="10" cy="8" rx="6" ry="5" fill="#e4edf5"/><circle cx="19" cy="8" r="4" fill="#cfe0f0" stroke="#4a5868"/><circle cx="3" cy="18" r="2" fill="#8b97a3" stroke="#4a5868"/><path d="M4 18c7-1 12-5 15-10" fill="none" stroke="#3b4556" stroke-width="1.500"/></svg></button>
                        <button aria-label="三维"><svg width="24" height="24" viewBox="0 0 24 24"><use href="#i-cube"/><text x="7" y="20" class="cube-label">3D</text></svg></button>
                        <button aria-label="线框"><svg width="24" height="24" viewBox="0 0 24 24"><use href="#i-cube"/><path d="M2 7h16v15H2zM20 6l2-3v15l-2 3z" fill="#d4e8ff"/><path d="M5 7v11h17M5 18l-4 5M19 6v17" fill="none" stroke="#3b4556"/></svg></button>
                        <i class="caret navy"></i>
                        <button aria-label="实体"><svg width="24" height="24"><use href="#i-cube"/></svg></button>
                        <i class="caret navy"></i>
                        <button aria-label="旋转"><svg width="24" height="24" viewBox="0 0 24 24"><path d="M20 6A10 10 0 1 0 20 18" fill="none" stroke="#3b4556" stroke-width="2"/><path d="M22 1v8h-8z" fill="#3b4556"/></svg></button>
                        <i class="caret navy"></i>
                        <hr>
                        <button aria-label="显示设置"><svg width="24" height="24" viewBox="0 0 24 24"><path d="M1 4l3-3h18l1 3v19H1z" fill="#8b9bb3" stroke="#3b4556"/><path d="M1 4h22M12 9v12M4 6l2 2 2-3M15 6l2 2 2-3" fill="none" stroke="#3b4556"/><path d="M3.500 10.500h2v2h-2zM3.500 14.500h2v2h-2zM3.500 18.500h2v2h-2zM14.500 10.500h2v2h-2zM14.500 14.500h2v2h-2zM14.500 18.500h2v2h-2zM8 11.500h2M8 15.500h2M8 19.500h2M19 11.500h2M19 15.500h2M19 19.500h2" fill="none" stroke="#3b4556"/></svg></button>
                    </div>
                    <div class="right-handle"></div>
                </section>
            </main>

            <footer class="status">
                <span class="coords">X = 93378.08 Y = -10063.2</span>
                <span class="height">层高：4.5</span>
                <span class="base">底标高：5.4</span>
                <span class="zero">0</span>
                <span class="hidden-count">隐藏：0</span>
                <button class="flat" aria-label="正交"><svg class="ic" viewBox="0 0 16 16"><path d="M2 1v13h13M2 9h5v5" fill="none" stroke="#444"/></svg></button>
                <button aria-label="捕捉框"><svg class="ic" viewBox="0 0 16 16"><path d="M3.500 3.500h11v12h-11z" fill="none" stroke="#3d85d8"/><path d="M.5.5h4v4h-4z" fill="#ffb27a" stroke="#f37021"/></svg><i class="caret"></i></button>
                <button aria-label="三维捕捉"><svg class="ic" viewBox="0 0 16 16"><path d="M9 2l6 3v7l-6 3-6-3V5zM3 5l6 3 6-3M9 8v7" fill="#fff" stroke="#3d85d8"/><path d="M.5.5h4v4h-4z" fill="#ffb27a" stroke="#f37021"/></svg><i class="caret"></i></button>
                <button class="flat" aria-label="交点"><svg class="ic" viewBox="0 0 16 16"><path d="M1 1l14 14M15 1L1 15" stroke="#999"/><path d="M6.500 6.500h3v3h-3z" fill="none" stroke="#999"/></svg></button>
                <button aria-label="角度"><svg class="ic" viewBox="0 0 16 16"><path d="M13 2L2 14h14" fill="none" stroke="#3d85d8"/><circle cx="8" cy="8" r="1.500" fill="#f37021"/></svg><i class="caret"></i></button>
                <button aria-label="动态输入"><svg class="ic" viewBox="0 0 16 16"><path d="M4 1v8M0 5h8" stroke="#3d85d8"/><path d="M6 10h10v5H6z" fill="#3d85d8"/></svg><i class="caret"></i></button>
                <button class="text">跨类型选择</button>
                <button class="text">折线选择</button>
                <label class="bright" for="bright">CAD图亮度：44%</label>
                <button class="flat step" aria-label="降低亮度"><svg class="ic" viewBox="0 0 16 16"><circle cx="8" cy="8" r="7" fill="#fff" stroke="#888"/><path d="M5 8h6" stroke="#444" stroke-width="2"/></svg></button>
                <input id="bright" type="range" min="0" max="100" value="44">
                <button class="flat step" aria-label="提高亮度"><svg class="ic" viewBox="0 0 16 16"><circle cx="8" cy="8" r="7" fill="#fff" stroke="#888"/><path d="M5 8h6M8 5v6" stroke="#444" stroke-width="2"/></svg></button>
                <span class="prompt">按鼠标左键指定第一个角点，或拾取构件图元</span>
                <span class="fps">90.9091 FPS</span>
            </footer>
        </div>
    </div>
    <div class="taskbar"><i></i><span>17:07:50</span></div>
</body>
</html>
```

FILE: styles.css
```css
* {
    box-sizing: border-box;
}
body {
    margin: 0;
    height: 100vh;
    overflow: hidden;
    display: flex;
    flex-direction: column;
    background: #05080f;
    color: #111;
    font: 12px/16px "Open Sans", "Noto Sans CJK SC", sans-serif;
    white-space: nowrap;
}
button, input, select {
    font: inherit;
    color: inherit;
    margin: 0;
    padding: 0;
    border: 0;
    background: none;
    outline: 0;
}
button {
    display: flex;
    align-items: center;
}
svg {
    flex: none;
    display: block;
}
ul {
    list-style: none;
    margin: 0;
    padding: 0;
}
h1, h2 {
    margin: 0;
    font-size: 12px;
    font-weight: normal;
}
.sprite {
    position: absolute;
}
.ic {
    width: 16px;
    height: 16px;
}
.caret {
    flex: none;
    width: 0;
    height: 0;
    border: 3px solid transparent;
    border-top: 4px solid #555;
    border-bottom: 0;
}
.caret.faint { border-top-color: #aaa; }
.caret.navy { border-top-color: #3b4556; }
.caret.lg { border-width: 4px 4px 0; margin-left: 6px; }
.caret.near { margin-left: 2px; }
.caret.far { margin-left: 5px; }
.tiny {
    font: bold 6px "Liberation Sans", sans-serif;
    fill: #6d7d88;
}
.tiny.blue { fill: #3d85d8; }
.tiny.orange { fill: #f37021; }
.glyph {
    font: bold 12px "Liberation Sans", sans-serif;
    fill: #fff;
}

/* window */
.screen {
    flex: 1;
    min-height: 0;
    display: flex;
}
.behind {
    width: 8px;
    margin-bottom: 10px;
    padding-top: 427px;
    background: linear-gradient(#a9dffb 43px, #e2f2fd 43px, #e2f2fd 130px, #f0f0f0 130px);
}
.behind i {
    display: block;
    width: 6px;
    height: 277px;
    background: #c4c4c4;
}
.app {
    flex: 1;
    min-width: 0;
    display: flex;
    flex-direction: column;
    background: #fff;
    border-bottom: 1px solid #fff;
}
.taskbar {
    height: 8px;
    display: flex;
    justify-content: space-between;
    overflow: hidden;
    padding: 0 12px 0 108px;
    color: #fff;
    background: linear-gradient(90deg, #05080f, #0a1630 20%, #060d12 50%, #05080f);
}
.taskbar i {
    width: 48px;
    background: #2c3347;
}
.taskbar span {
    padding-top: 2px;
}

/* header */
.header {
    height: 41px;
    display: grid;
    grid-template-columns: 1fr auto 1fr;
    grid-template-rows: 21px 19px;
    border-bottom: 1px solid #d4d6d9;
}
.logo {
    grid-area: 1 / 1 / 3 / 2;
    width: 46px;
    height: 40px;
    padding: 3px 0 0 8px;
    border-right: 1px solid #d4d6d9;
}
.quick {
    grid-area: 1 / 1;
    margin-left: 55px;
    display: flex;
    align-items: center;
    gap: 7px;
}
.quick .dd {
    width: 9px;
    margin: 0 -3px 0 -4px;
}
.quick .over {
    margin-left: 2px;
}
.quick .over .caret {
    padding-top: 0;
    box-shadow: 0 -4px 0 -3px #555;
}
.title {
    grid-area: 1 / 2;
    line-height: 21px;
}
.window-buttons {
    grid-area: 1 / 3;
    display: flex;
    justify-content: flex-end;
    gap: 20px;
    padding-right: 11px;
}
.tabs {
    grid-area: 2 / 1 / 3 / 3;
    margin-left: 50px;
    display: flex;
}
.tabs button {
    padding: 0 13px;
    color: #333;
}
.tabs .active {
    color: #fff;
    background: #55a3f7;
    border-radius: 3px 3px 0 0;
}
.tools {
    grid-area: 2 / 3;
    display: flex;
    align-items: center;
    justify-content: flex-end;
    gap: 5px;
    padding-right: 6px;
}
.help {
    gap: 3px;
    padding-left: 4px;
    color: #888;
    font-size: 16px;
}
.top-search {
    display: flex;
    align-items: center;
    gap: 7px;
    width: 150px;
    height: 17px;
    margin-right: -4px;
    padding: 0 5px 0 2px;
    border: 1px solid #888;
    background: #fff;
}
.top-search input, .search input {
    flex: 1;
    min-width: 0;
}

/* ribbon */
.ribbon {
    height: 103px;
    display: flex;
    padding-top: 2px;
    background: linear-gradient(#fff 45%, #e6eaeb);
    border-bottom: 2px solid #9a9da2;
}
.group {
    display: flex;
    flex-direction: column;
    height: 96px;
    border-right: 1px solid #cdd0d3;
}
.cols {
    display: grid;
    height: 78px;
    padding: 1px 0 0 8px;
    align-items: start;
}
.col button {
    gap: 3px;
    height: 23px;
}
.col .caret {
    margin-right: -12px;
}
.col button:disabled {
    color: #b0b0b0;
}
.big {
    flex-direction: column;
    width: 43px;
    height: 68px;
    margin-top: 1px;
    padding-top: 4px;
    gap: 4px;
}
.big.wide { width: 54px; }
.big.on { background: #c9d8f0; }
.caption {
    display: flex;
    align-items: center;
    justify-content: center;
    height: 18px;
}
.g-select { width: 142px; }
.g-select .cols { grid-template-columns: 47px auto; }
.g-comp { width: 189px; }
.g-comp .cols { grid-template-columns: 89px auto; padding-left: 9px; }
.g-draw { width: 57px; }
.g-draw .cols { padding-left: 5px; }
.g-detect { width: 229px; }
.g-detect .cols { grid-template-columns: 61px 84px auto; }
.g-check { width: 312px; }
.g-check .cols { grid-template-columns: 84px 84px auto; }
.g-edit { width: 183px; }
.g-edit .cols { grid-template-columns: 111px auto; }
.g-second { width: 192px; }
.g-second .cols { grid-template-columns: 96px auto; }
.g-cad { width: 274px; }
.g-cad .cols { grid-template-columns: 85px 109px auto; }

/* filters */
.filters {
    height: 26px;
    display: flex;
    gap: 5px;
    padding: 1px 2px;
    background: #c9ccd1;
    border-bottom: 1px solid #8f939a;
}
.combo {
    position: relative;
    width: 100px;
    height: 23px;
    background: #fff;
    border: 1px solid #a2a5aa;
}
.combo select {
    appearance: none;
    width: 84px;
    height: 21px;
    padding-left: 3px;
}
.combo::after {
    content: "";
    position: absolute;
    right: 4px;
    top: 9px;
    border: 3px solid transparent;
    border-top: 4px solid #555;
    border-bottom: 0;
}

/* docked panels */
.workspace {
    flex: 1;
    min-height: 0;
    display: flex;
}
.panel {
    display: flex;
    flex-direction: column;
    border: 1px solid #b8bbc0;
    border-top: 0;
    background: #fff;
}
.nav-panel {
    width: 200px;
    margin-right: 5px;
}
.stack {
    width: 432px;
    display: flex;
    flex-direction: column;
    gap: 4px;
}
.list-panel {
    height: 380px;
}
.prop-panel {
    flex: 1;
    min-height: 0;
}
.grip {
    height: 12px;
    display: flex;
    justify-content: flex-end;
    background: #d2d3d9;
    border-bottom: 1px solid #c3c7cf;
}
.grip button {
    width: 16px;
    justify-content: center;
    color: #666;
    line-height: 10px;
}
.panel h2 {
    height: 22px;
    padding-left: 8px;
    line-height: 21px;
    color: #777;
    background: #efefef;
    border-bottom: 1px solid #c3c7cf;
}
.toolbar {
    height: 28px;
    display: flex;
    align-items: center;
    gap: 7px;
    padding-left: 4px;
    color: #333;
    background: #efefef;
    border-bottom: 1px solid #c3c7cf;
}
.toolbar button {
    gap: 4px;
}
.toolbar .caret {
    margin-left: 3px;
}
.nav-tools {
    gap: 8px;
    padding-left: 6px;
}
.tree {
    padding: 3px 0 0 2px;
    line-height: 24px;
}
.tree .ic {
    display: inline-block;
    vertical-align: middle;
    margin: -3px 5px 0 0;
}
.tree ul {
    display: flex;
    flex-direction: column;
    gap: 2px;
    padding: 1px 0 1px 38px;
}
.tree ul li {
    width: 114px;
    height: 22px;
    padding-left: 3px;
    line-height: 22px;
}
.tree .selected {
    background: #c9d8f0;
}
.search {
    height: 20px;
    display: flex;
    align-items: center;
    padding: 0 6px 0 2px;
    border-bottom: 1px solid #c3c7cf;
}
.search input::placeholder {
    color: #777;
    opacity: 1;
}
.list-box {
    flex: 1;
    position: relative;
}
.items {
    padding: 3px 14px 0 60px;
    line-height: 22px;
}
.items li {
    height: 22px;
    margin-bottom: 2px;
    padding-left: 3px;
}
.items .selected {
    background: #b0caec;
}
.items .parent {
    margin-left: -29px;
    padding-left: 0;
}
.items .parent::before {
    content: "";
    display: inline-block;
    margin-right: 6px;
    border-left: 6px solid transparent;
    border-bottom: 6px solid #333;
}
.vbar, .hbar {
    position: absolute;
    border-radius: 4px;
    background: #c9c9c9;
}
.vbar {
    right: 3px;
    bottom: 28px;
    width: 8px;
    height: 30px;
}
.hbar {
    left: 14px;
    bottom: 3px;
    width: 232px;
    height: 8px;
}

/* properties */
.prop-box {
    flex: 1;
    background: linear-gradient(90deg, #efefef 22px, #fff 22px);
    border-bottom: 1px solid #b8bbc0;
}
.props {
    width: 429px;
    table-layout: fixed;
    border-collapse: collapse;
}
.props th, .props td {
    height: 21px;
    padding: 0 2px;
    border: 1px solid #cfcfcf;
    border-width: 0 1px 1px 0;
    line-height: 16px;
}
.props th {
    padding: 0;
    text-align: center;
    font-weight: normal;
    color: #444;
    background: #efefef;
}
.props .num { width: 22px; }
.props .name { width: 115px; }
.props .extra { width: 41px; }
.props .value {
    color: #fff;
    font-weight: bold;
    background: #80b9f9;
}
.props .current th {
    color: #fff;
    font-weight: bold;
    background: #80b9f9;
}
.props .link { color: #1450f0; }
.props .off {
    color: #8c8c8c;
    background: #e9e9e9;
}
.props .edit {
    padding: 0;
}
.props .edit input {
    display: block;
    width: 100%;
    height: 20px;
    border: 2px solid #7d7d7d;
}
.props input[type="checkbox"] {
    appearance: none;
    display: block;
    width: 14px;
    height: 14px;
    margin: 0 auto;
    border: 1px solid #888;
    border-radius: 2px;
    background: #fff;
}
.props input[type="checkbox"]:checked {
    background: #4da0f8;
    border-color: #4da0f8;
}
.props input[type="checkbox"]:checked::after {
    content: "";
    display: block;
    width: 4px;
    height: 7px;
    margin: 1px 0 0 4px;
    border: solid #fff;
    border-width: 0 2px 2px 0;
    transform: rotate(45deg);
}
.expand {
    display: inline-block;
    width: 11px;
    height: 11px;
    margin-right: 7px;
    border: 1px solid #555;
    border-radius: 2px;
    background: linear-gradient(#333, #333) center / 5px 1px no-repeat, linear-gradient(#333, #333) center / 1px 5px no-repeat;
}
.prop-actions {
    height: 27px;
    display: flex;
    gap: 7px;
    padding-top: 1px;
    background: #efefef;
}
.prop-actions button {
    width: 79px;
    justify-content: center;
    border: 1px solid #c3c7cf;
    border-radius: 3px;
    background: #fff;
}
.splitter {
    width: 4px;
    display: flex;
    align-items: center;
}
.splitter i, .right-handle {
    width: 4px;
    height: 100px;
    background: #5f6b78;
}

/* drawing area */
.canvas {
    flex: 1;
    min-width: 0;
    position: relative;
    overflow: hidden;
    background: #000;
}
.drawing {
    width: 100%;
    height: 100%;
}
.cad {
    font: 300 19px "Liberation Sans Narrow", "Roboto", sans-serif;
    fill: #8a8a8a;
}
.cad .sm { font-size: 16px; }
.cad .xs { font-size: 10px; }
.cad .zh {
    font-family: "Noto Sans CJK SC", sans-serif;
    font-size: 13px;
}
.ucs {
    font: 15px "Liberation Sans", sans-serif;
}
.hint {
    position: absolute;
    left: 527px;
    top: 346px;
    padding: 1px 6px 2px;
    color: #000;
    background: #929292;
}
.view-tools {
    position: absolute;
    top: 0;
    right: 0;
    width: 33px;
    height: 226px;
    display: flex;
    flex-direction: column;
    align-items: center;
    padding-top: 10px;
    background: #96979b;
    border: 1px solid #b4b5b8;
}
.view-tools button {
    height: 24px;
    margin-bottom: 5px;
}
.view-tools .caret {
    margin: 0 0 6px;
}
.view-tools hr {
    width: 24px;
    margin: 0 0 4px;
    border: 0;
    border-top: 1px solid #666;
}
.cube-label {
    font: 9px "Liberation Sans", sans-serif;
    fill: #222;
}
.right-handle {
    position: absolute;
    right: 0;
    top: 371px;
}

/* status bar */
.status {
    height: 29px;
    display: flex;
    align-items: center;
    gap: 3px;
    padding: 0 12px 0 2px;
    color: #333;
    background: #dcdcde;
}
.coords { width: 260px; }
.height { width: 110px; }
.base { width: 130px; }
.zero { width: 100px; }
.hidden-count { width: 100px; }
.status button {
    height: 25px;
    min-width: 36px;
    justify-content: center;
    gap: 7px;
    background: #fff;
    border: 1px solid #2b8ce8;
}
.status .flat {
    min-width: 25px;
    background: #cfcfd1;
    border-color: #999;
}
.status .text {
    padding: 0 5px;
}
.bright {
    width: 115px;
    padding-left: 3px;
}
.status input {
    appearance: none;
    width: 45px;
    height: 25px;
    margin: 0 -3px;
    background: linear-gradient(#bbb, #bbb) center / 100% 1px no-repeat;
}
.status input::-webkit-slider-thumb {
    appearance: none;
    width: 9px;
    height: 18px;
    border: 1px solid #555;
    border-radius: 2px;
    background: #fff;
}
.prompt {
    flex: 1;
    margin-left: -3px;
}
```
